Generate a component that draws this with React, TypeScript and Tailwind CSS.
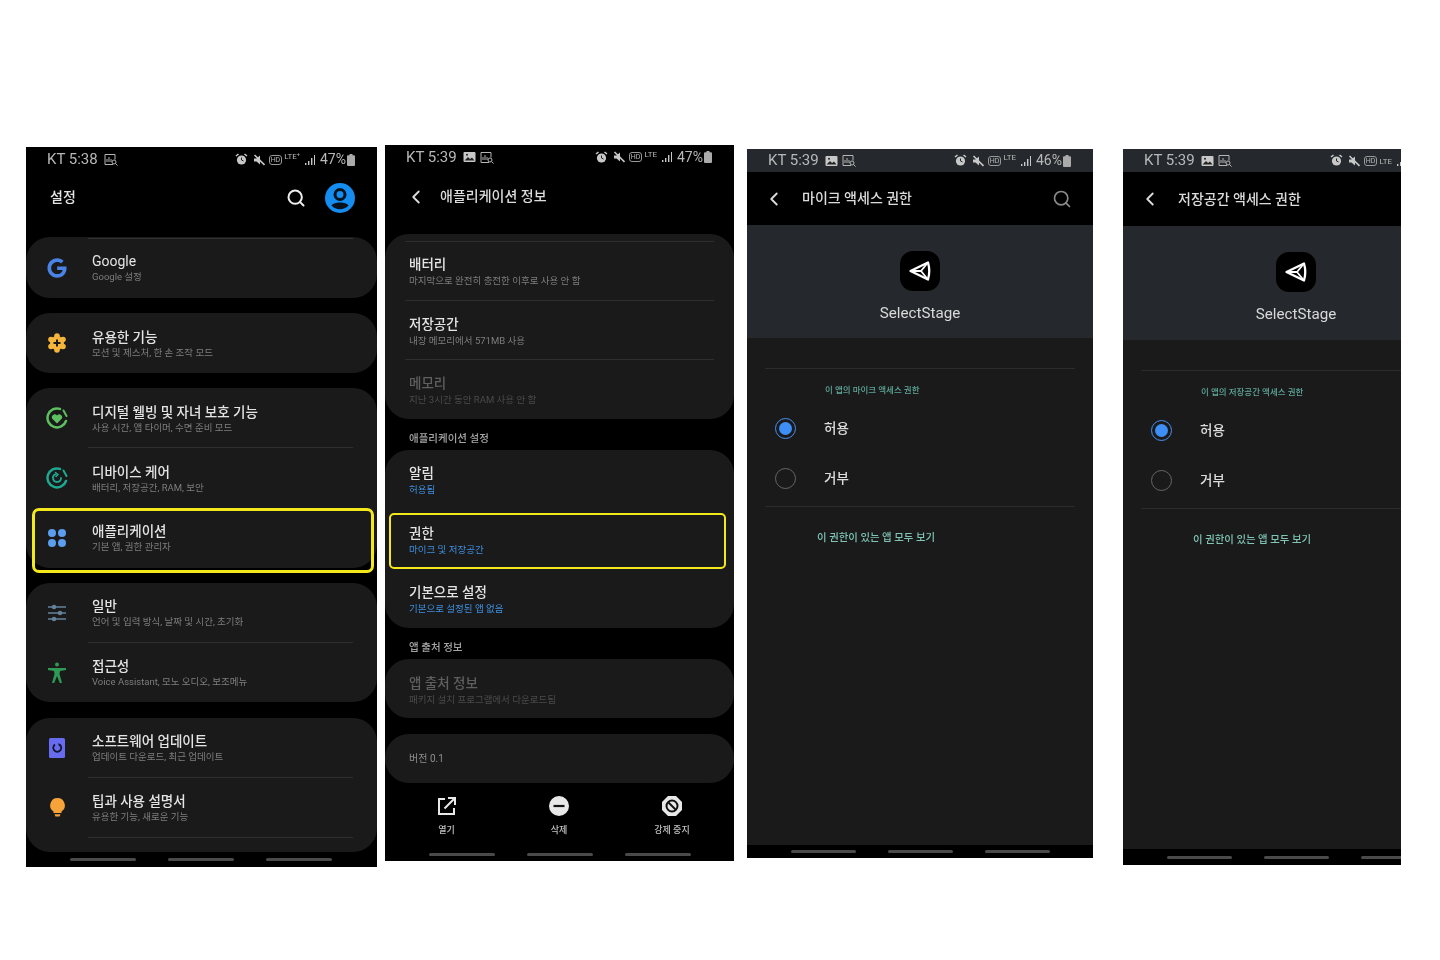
import React from 'react';
import { ChevronLeft, Search } from 'lucide-react';
import { FaGoogle } from 'react-icons/fa6';

const FONT = "font-['Roboto','Noto_Sans_CJK_KR',sans-serif]";

/* ---------- status bar ---------- */
const GalleryIcon = () => (
  <svg width="13" height="12" viewBox="0 0 13 12" className="mr-[4px]">
    <rect x="0.5" y="1" width="12" height="10" rx="1" fill="#c8c8c8" />
    <path d="M1.5 9.5 5 6l2 2 2-1.5 2.5 3z" fill="#222" />
    <circle cx="4" cy="3.8" r="1" fill="#222" />
  </svg>
);

const ReportIcon = () => (
  <svg width="14" height="13" viewBox="0 0 14 13" fill="none" stroke="#b5b5b5">
    <path d="M9 11.5H1V1.5h10v5" />
    <path d="M3 9V6M5 9V4M7 9V6" />
    <circle cx="10" cy="9" r="2" />
    <path d="m11.5 10.5 2 2" />
  </svg>
);

const StatusBar = ({
  time,
  gallery,
  pct,
  lte = 'LTE',
  bg,
  h,
}: {
  time: string;
  gallery?: boolean;
  pct?: string;
  lte?: string;
  bg: string;
  h: string;
}) => (
  <div className={`flex items-center justify-between shrink-0 pl-[21px] pr-[22px] text-[#b8b8b8] ${bg} ${h}`}>
    <div className="flex items-center gap-[6px] text-[15px]">
      <span>{time}</span>
      <span className="flex items-center">
        {gallery && <GalleryIcon />}
        <ReportIcon />
      </span>
    </div>
    <div className="flex items-center text-[14px] whitespace-nowrap">
      <svg width="13" height="13" viewBox="0 0 13 13" className="mr-[5px]">
        <circle cx="6.5" cy="7" r="4.6" fill="#c8c8c8" />
        <path d="M6.5 4.5V7l2 1" stroke="#222" fill="none" />
        <path d="M1 3l2.5-2M12 3 9.5 1" stroke="#c8c8c8" strokeWidth="1.6" />
      </svg>
      <svg width="12" height="12" viewBox="0 0 12 12" className="mr-[4px]">
        <path d="M1 4.5h2.5L7 1.5v9L3.5 7.5H1z" fill="#c8c8c8" />
        <path d="M1.5 1l10 10" stroke="#c8c8c8" strokeWidth="1.6" />
      </svg>
      <span className="border border-[#999] rounded-[3px] text-[7px] leading-[8px] px-[1px] mr-[2px]">HD</span>
      <span className="text-[8px] leading-[9px] mr-[5px] self-start mt-[3px]">{lte}</span>
      <svg width="10" height="10" viewBox="0 0 10 10" className="mr-[5px]">
        <path d="M0 8h1.4v2H0zM3 6h1.4v4H3zM6 3h1.4v7H6zM9 0h1v10H9z" fill="#c8c8c8" />
      </svg>
      {pct ? <span>{pct}</span> : <span className="w-[26px]" />}
      <svg width="8" height="12" viewBox="0 0 8 12" className="ml-[1px]">
        <path d="M2.5 0h3v1.2H7a1 1 0 0 1 1 1V11a1 1 0 0 1-1 1H1a1 1 0 0 1-1-1V2.200a1 1 0 0 1 1-1h1.500z" fill="#aaa" />
      </svg>
    </div>
  </div>
);

const NavBars = ({ className, narrow }: { className: string; narrow?: boolean }) => (
  <div className={`flex shrink-0 items-center pl-[44px] gap-[32px] ${className}`}>
    <span className={`h-[3px] rounded-full bg-[#4a4a4a] ${narrow ? 'w-[65px]' : 'w-[66px]'}`} />
    <span className={`h-[3px] rounded-full bg-[#4a4a4a] ${narrow ? 'w-[65px]' : 'w-[66px]'}`} />
    <span className={`h-[3px] rounded-full bg-[#4a4a4a] ${narrow ? 'w-[65px]' : 'w-[66px]'}`} />
  </div>
);

const Highlight = ({ className }: { className: string }) => (
  <div className={`absolute border-[#f3e81c] ${className}`} />
);

/* ---------- settings icons ---------- */
const Flower = () => (
  <svg width="20" height="20" viewBox="0 0 20 20" fill="#f5b43c">
    <circle cx="10" cy="3" r="2.800" />
    <circle cx="16" cy="6.500" r="2.800" />
    <circle cx="16" cy="13.500" r="2.800" />
    <circle cx="10" cy="17" r="2.800" />
    <circle cx="4" cy="13.500" r="2.800" />
    <circle cx="4" cy="6.500" r="2.800" />
    <circle cx="10" cy="10" r="7" />
    <path d="M10 6.500v7M6.500 10h7" stroke="#1a1a1a" strokeWidth="2" />
  </svg>
);

const Wellbeing = () => (
  <svg width="22" height="22" viewBox="0 0 22 22" fill="none">
    <path d="M14 1.900A9.500 9.500 0 1 0 20 14" stroke="#5cbf60" strokeWidth="2.500" strokeLinecap="round" />
    <path d="M17.500 3.500 20.500 9" stroke="#5cbf60" strokeWidth="2" strokeLinecap="round" />
    <path d="M11 16.500 6.500 12a2.700 2.700 0 0 1 4.500-3.500A2.700 2.700 0 0 1 15.500 12z" fill="#5cbf60" />
  </svg>
);

const DeviceCare = () => (
  <svg width="22" height="22" viewBox="0 0 22 22" fill="none" stroke="#1fa890" strokeWidth="2.500" strokeLinecap="round">
    <path d="M14 1.900A9.500 9.500 0 1 0 20 14" />
    <path d="M17.500 3.500 20.500 9" strokeWidth="2" />
    <path d="M15 11a4 4 0 1 1-5-3.900" strokeWidth="1.800" />
    <path d="M9.500 5.500 12 7.500l-2 2" strokeWidth="1.500" />
  </svg>
);

const Dots = () => (
  <div className="grid grid-cols-2 gap-[2.500px]">
    <span className="w-[8px] h-[8px] rounded-full bg-[#5c9ded]" />
    <span className="w-[8px] h-[8px] rounded-full bg-[#5c9ded]" />
    <span className="w-[8px] h-[8px] rounded-full bg-[#5c9ded]" />
    <span className="w-[8px] h-[8px] rounded-full bg-[#5c9ded]" />
  </div>
);

const Sliders = () => (
  <svg width="20" height="18" viewBox="0 0 20 18" stroke="#64829c" strokeWidth="1.500">
    <path d="M1 3h18M1 9h18M1 15h18" />
    <circle cx="7" cy="3" r="1.500" fill="#64829c" />
    <circle cx="13" cy="9" r="1.500" fill="#64829c" />
    <circle cx="7" cy="15" r="1.500" fill="#64829c" />
  </svg>
);

const Person = () => (
  <svg width="18" height="22" viewBox="0 0 18 22" fill="#2f9a54">
    <circle cx="9" cy="2.500" r="2" />
    <path d="M0 6h18v2l-6 1-.500 3L14 21h-2.200L9 14l-2.800 7H4l2.500-9L6 9 0 8z" />
  </svg>
);

const UpdateIcon = () => (
  <svg width="16" height="20" viewBox="0 0 16 20">
    <rect width="16" height="20" rx="1.500" fill="#676bf0" />
    <path d="M6 6.500a4 4 0 1 0 4.500 0" fill="none" stroke="#15152a" strokeWidth="1.800" />
    <path d="M9 5l2.500 1.500-1.500 2" fill="#15152a" />
  </svg>
);

const Bulb = () => (
  <svg width="15" height="20" viewBox="0 0 15 20" fill="#f6a43a">
    <path d="M7.500 0a7.300 7.300 0 0 1 4 13.400V15h-8v-1.600A7.300 7.300 0 0 1 7.500 0z" />
    <path d="M4.500 16.200h6l-1 2.300H5.500z" />
  </svg>
);

const UnityLogo = () => (
  <svg width="24" height="24" viewBox="0 0 24 24" fill="none" stroke="#ffffff" strokeWidth="2.300" strokeLinejoin="round">
    <path d="M2.500 12 20 3.500Q22.500 12 20 20.500Z" />
    <path d="M2.500 12H13M13 12l6.500-8M13 12l6.500 8" strokeWidth="1.800" />
  </svg>
);

/* ---------- phone 1 ---------- */
const Row = ({
  icon,
  title,
  sub,
  line,
  plain,
  up,
  h = 'h-[60px]',
}: {
  icon: React.ReactNode;
  title: string;
  sub: string;
  line?: boolean;
  plain?: boolean;
  up?: boolean;
  h?: string;
}) => (
  <div className={`relative flex items-center ${h}`}>
    <div className="w-[62px] flex justify-center shrink-0">{icon}</div>
    <div className={`ml-[4px] flex flex-col ${up ? '' : 'pt-[1px]'}`}>
      <span className={`text-[13.5px] leading-[17px] text-[#e4e4e4] ${plain ? 'font-normal text-[14px]' : 'font-medium'}`}>{title}</span>
      <span className="text-[9.5px] leading-[13px] text-[#7d7d7d]">{sub}</span>
    </div>
    {line && <div className="absolute bottom-0 left-[62px] right-[24px] h-px bg-[#2e2e2e]" />}
  </div>
);

const Card = ({ children, className = '' }: { children: React.ReactNode; className?: string }) => (
  <div className={`rounded-[24px] bg-[#1a1a1a] ${className}`}>{children}</div>
);

const SettingsPhone = () => (
  <div className="relative flex flex-col w-[351px] h-[720px] mt-[2px] bg-black overflow-hidden shrink-0 blur-[0.5px]">
    <StatusBar time="KT 5:38" lte="LTE⁺" pct="47%" bg="bg-black" h="h-[25px]" />
    <div className="flex items-center justify-between h-[65px] pb-[14px] pl-[24px] pr-[22px] shrink-0">
      <span className="text-[14px] font-medium text-[#e4e4e4]">설정</span>
      <div className="flex items-center gap-[19px]">
        <Search size={20} strokeWidth={2.4} className="text-[#eeeeee]" />
        <svg width="30" height="30" viewBox="0 0 30 30">
          <circle cx="15" cy="15" r="15" fill="#158cf0" />
          <circle cx="15" cy="11.500" r="5" fill="none" stroke="#06121e" strokeWidth="3" />
          <path d="M6.500 22.500c2-4 15-4 17 0a11.500 11.500 0 0 1-17 0z" fill="#06121e" />
        </svg>
      </div>
    </div>
    <Card className="relative">
      <div className="absolute top-[1px] left-[62px] right-[24px] h-px bg-[#333333]" />
      <Row icon={<FaGoogle size={20} className="text-[#4a83e6]" />} title="Google" sub="Google 설정" h="h-[61px]" plain />
    </Card>
    <Card className="mt-[15px]">
      <Row icon={<Flower />} title="유용한 기능" sub="모션 및 제스처, 한 손 조작 모드" />
    </Card>
    <Card className="mt-[15px]">
      <Row icon={<Wellbeing />} title="디지털 웰빙 및 자녀 보호 기능" sub="사용 시간, 앱 타이머, 수면 준비 모드" line />
      <Row icon={<DeviceCare />} title="디바이스 케어" sub="배터리, 저장공간, RAM, 보안" />
      <div className="relative">
        <Row icon={<Dots />} title="애플리케이션" sub="기본 앱, 권한 관리자" up />
        <Highlight className="border-[3px] rounded-[7px] left-[6px] right-[3px] top-0 -bottom-[5px]" />
      </div>
    </Card>
    <Card className="mt-[15px]">
      <Row icon={<Sliders />} title="일반" sub="언어 및 입력 방식, 날짜 및 시간, 초기화" line up />
      <Row icon={<Person />} title="접근성" sub="Voice Assistant, 모노 오디오, 보조메뉴" h="h-[59px]" />
    </Card>
    <Card className="mt-[16px] pb-[14px]">
      <Row icon={<UpdateIcon />} title="소프트웨어 업데이트" sub="업데이트 다운로드, 최근 업데이트" line up />
      <Row icon={<Bulb />} title="팁과 사용 설명서" sub="유용한 기능, 새로운 기능" line up />
    </Card>
    <NavBars className="h-[15px]" />
  </div>
);

/* ---------- phone 2 ---------- */
const InfoRow = ({
  title,
  sub,
  dim,
  blue,
  line,
  h = 'h-[59px] pt-[1px]',
}: {
  title: string;
  sub: string;
  dim?: boolean;
  blue?: boolean;
  line?: boolean;
  h?: string;
}) => (
  <div className={`relative flex flex-col justify-center pl-[24px] ${h}`}>
    <span className={`text-[13.5px] leading-[18px] font-medium ${dim ? 'text-[#5f5f5f]' : 'text-[#e4e4e4]'}`}>{title}</span>
    <span className={`text-[9.500px] leading-[15px] ${blue ? 'text-[#3f8fe0]' : dim ? 'text-[#4a4a4a]' : 'text-[#7d7d7d]'}`}>{sub}</span>
    {line && <div className="absolute bottom-0 left-[20px] right-[20px] h-px bg-[#2e2e2e]" />}
  </div>
);

const SectionLabel = ({ text, h }: { text: string; h: string }) => (
  <div className={`flex items-center pl-[24px] text-[10.5px] text-[#a5a5a5] font-medium ${h}`}>{text}</div>
);

const AppInfoPhone = () => (
  <div className="relative flex flex-col w-[349px] h-[716px] ml-[8px] bg-black overflow-hidden shrink-0 blur-[0.5px]">
    <StatusBar time="KT 5:39" gallery pct="47%" bg="bg-black" h="h-[24px]" />
    <div className="flex items-center h-[65px] pb-[10px] pl-[20px] shrink-0">
      <ChevronLeft size={22} className="text-[#dddddd]" />
      <span className="ml-[13px] text-[14px] font-medium text-[#dcdcdc]">애플리케이션 정보</span>
    </div>
    <Card className="relative pt-[7px]">
      <div className="absolute top-[7px] left-[20px] right-[20px] h-px bg-[#2e2e2e]" />
      <InfoRow title="배터리" sub="마지막으로 완전히 충전한 이후로 사용 안 함" line h="h-[60px] pt-[1px]" />
      <InfoRow title="저장공간" sub="내장 메모리에서 571MB 사용" line />
      <InfoRow title="메모리" sub="지난 3시간 동안 RAM 사용 안 함" dim />
    </Card>
    <SectionLabel text="애플리케이션 설정" h="h-[31px] pt-[9px]" />
    <Card>
      <InfoRow title="알림" sub="허용됨" blue h="h-[60px]" />
      <div className="relative">
        <InfoRow title="권한" sub="마이크 및 저장공간" blue />
        <Highlight className="border-[2px] rounded-[5px] left-[4px] right-[8px] top-[3px] bottom-0" />
      </div>
      <InfoRow title="기본으로 설정" sub="기본으로 설정된 앱 없음" blue />
    </Card>
    <SectionLabel text="앱 출처 정보" h="h-[31px] pt-[9px]" />
    <Card>
      <InfoRow title="앱 출처 정보" sub="패키지 설치 프로그램에서 다운로드됨" dim h="h-[59px] pt-[3px]" />
    </Card>
    <Card className="mt-[16px] h-[49px] flex items-center pl-[24px] text-[10px] text-[#8f8f8f]">버전 0.1</Card>
    <div className="flex h-[64px] pt-[13px] shrink-0 text-[9px] font-medium text-[#c2c2c2]">
      <div className="w-[122px] flex flex-col items-center pl-[1px]">
        <svg width="20" height="20" viewBox="0 0 20 20" fill="none" stroke="#e8e8e8" strokeWidth="2">
          <path d="M8 3H2v15h15v-6" />
          <path d="M7.500 12.500 17 3M11 2h7v7" />
        </svg>
        <span className="mt-[8px]">열기</span>
      </div>
      <div className="w-[104px] flex flex-col items-center">
        <svg width="20" height="20" viewBox="0 0 20 20">
          <circle cx="10" cy="10" r="10" fill="#e8e8e8" />
          <path d="M4.500 10h11" stroke="#111" strokeWidth="2.200" />
        </svg>
        <span className="mt-[8px]">삭제</span>
      </div>
      <div className="w-[122px] flex flex-col items-center">
        <svg width="20" height="20" viewBox="0 0 20 20" fill="none">
          <path d="M6 0h8l6 6v8l-6 6H6l-6-6V6z" fill="#e8e8e8" />
          <circle cx="10" cy="10" r="5.500" stroke="#111" strokeWidth="2" />
          <path d="m6.500 6.500 7 7" stroke="#111" strokeWidth="2" />
        </svg>
        <span className="mt-[8px]">강제 중지</span>
      </div>
    </div>
    <NavBars className="flex-1" />
  </div>
);

/* ---------- phones 3, 4 ---------- */
const PermissionPhone = ({
  title,
  label,
  pct,
  search,
  outer,
  toolH,
  heroH,
  footH,
}: {
  title: string;
  label: string;
  pct?: string;
  search?: boolean;
  outer: string;
  toolH: string;
  heroH: string;
  footH: string;
}) => (
  <div className={`relative bg-black overflow-hidden shrink-0 blur-[0.5px] ${outer}`}>
    <div className="flex flex-col w-[346px] h-full">
      <StatusBar time="KT 5:39" gallery pct={pct} bg="bg-[#25292d]" h="h-[23px]" />
      <div className={`flex items-center justify-between bg-black shrink-0 pl-[16px] pr-[21px] ${toolH}`}>
        <div className="flex items-center">
          <ChevronLeft size={22} className="text-[#dddddd]" />
          <span className="ml-[17px] text-[14px] font-medium text-[#dcdcdc]">{title}</span>
        </div>
        {search && <Search size={20} className="text-[#8a8a8a]" />}
      </div>
      <div className={`flex flex-col items-center bg-[#25292d] shrink-0 pt-[26px] ${heroH}`}>
        <div className="w-[40px] h-[40px] rounded-[13px] bg-black flex items-center justify-center">
          <UnityLogo />
        </div>
        <span className="mt-[12px] text-[15.2px] leading-[20px] text-[#d8d8d8]">SelectStage</span>
      </div>
      <div className="flex-1 bg-[#1a1a1a] pt-[30px]">
        <div className="mx-[18px] h-px bg-[#2c2c2c]" />
        <div className="mt-[15px] pl-[78px] text-[8.500px] leading-[12px] font-medium text-[#5fa89a]">{label}</div>
        <div className="mt-[7px] flex items-center h-[50px] pl-[28px]">
          <span className="w-[21px] h-[21px] rounded-full border-[1.500px] border-[#4a90f0] flex items-center justify-center">
            <span className="w-[13px] h-[13px] rounded-full bg-[#3d8ef5]" />
          </span>
          <span className="ml-[28px] text-[13.500px] font-medium text-[#dcdcdc]">허용</span>
        </div>
        <div className="flex items-center h-[50px] pl-[28px]">
          <span className="w-[21px] h-[21px] rounded-full border-[1.500px] border-[#666666]" />
          <span className="ml-[28px] text-[13.500px] font-medium text-[#dcdcdc]">거부</span>
        </div>
        <div className="mt-[3px] mx-[18px] h-px bg-[#2c2c2c]" />
        <div className="mt-[24px] pl-[70px] text-[10.400px] leading-[14px] font-medium text-[#7fc4b4]">이 권한이 있는 앱 모두 보기</div>
      </div>
      <NavBars className={footH} narrow />
    </div>
  </div>
);

export default function App() {
  return (
    <div className={`flex items-start w-[1440px] h-[960px] overflow-hidden bg-white pl-[26px] pt-[145px] ${FONT}`}>
      <SettingsPhone />
      <AppInfoPhone />
      <PermissionPhone
        title="마이크 액세스 권한"
        label="이 앱의 마이크 액세스 권한"
        pct="46%"
        search
        outer="w-[346px] h-[709px] ml-[13px] mt-[4px]"
        toolH="h-[53px]"
        heroH="h-[113px]"
        footH="h-[13px]"
      />
      <PermissionPhone
        title="저장공간 액세스 권한"
        label="이 앱의 저장공간 액세스 권한"
        outer="w-[278px] h-[716px] ml-[30px] mt-[4px]"
        toolH="h-[54px]"
        heroH="h-[114px]"
        footH="h-[16px]"
      />
    </div>
  );
}
